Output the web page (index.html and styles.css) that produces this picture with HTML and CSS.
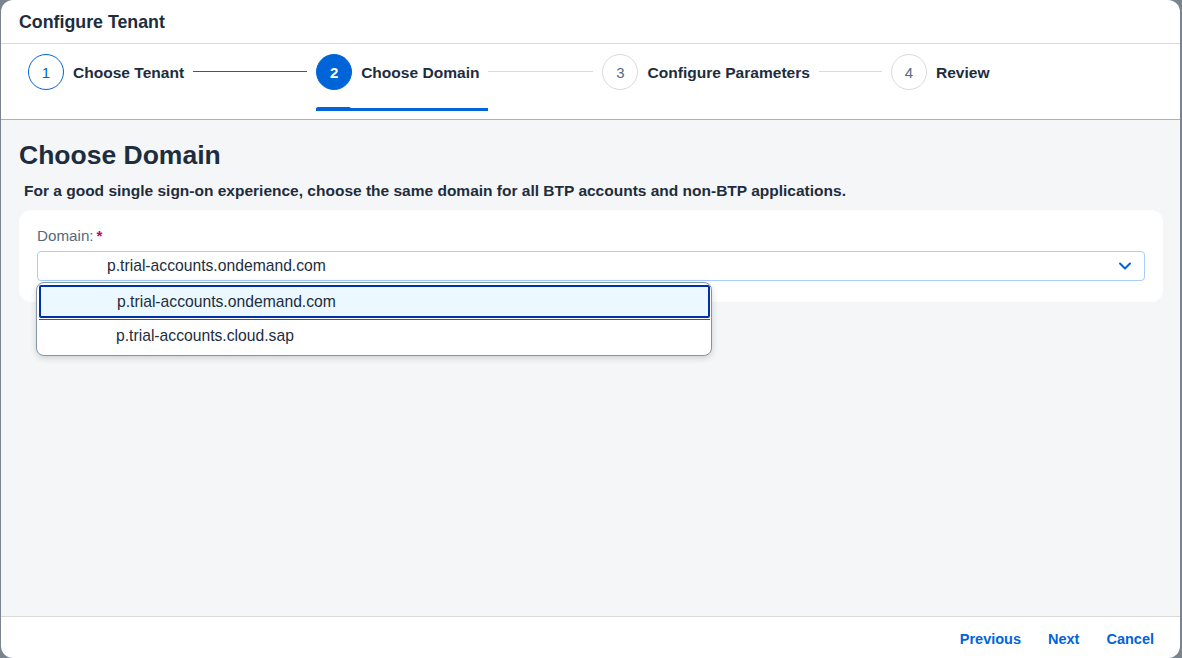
FILE: index.html
```html
<!DOCTYPE html>
<html>
<head>
<meta charset="utf-8">
<link rel="stylesheet" href="styles.css">
</head>
<body>
<div class="dialog">
  <header class="dlg-header">Configure Tenant</header>
  <nav class="wizard">
    <div class="step done">
      <span class="circle">1</span><span class="label">Choose Tenant</span>
    </div>
    <span class="connector blue"></span>
    <div class="step active">
      <span class="circle">2</span><span class="label">Choose Domain</span>
      <span class="underline"></span>
    </div>
    <span class="connector"></span>
    <div class="step">
      <span class="circle">3</span><span class="label">Configure Parameters</span>
    </div>
    <span class="connector short"></span>
    <div class="step">
      <span class="circle">4</span><span class="label">Review</span>
    </div>
  </nav>
  <main class="content">
    <h1 class="title">Choose Domain</h1>
    <p class="hint">For a good single sign-on experience, choose the same domain for all BTP accounts and non-BTP applications.</p>
    <section class="card">
      <label class="field-label">Domain:<span class="req">*</span></label>
      <div class="select">
        <span class="select-value">p.trial-accounts.ondemand.com</span>
        <svg class="chev" width="14" height="14" viewBox="0 0 14 14"><path d="M2 4.5 L7 9.5 L12 4.5" fill="none" stroke="#0064d9" stroke-width="2" stroke-linecap="round" stroke-linejoin="round"/></svg>
      </div>
      <ul class="popup">
        <li class="opt selected">p.trial-accounts.ondemand.com</li>
        <li class="opt">p.trial-accounts.cloud.sap</li>
      </ul>
    </section>
  </main>
  <footer class="dlg-footer">
    <button class="btn">Previous</button>
    <button class="btn">Next</button>
    <button class="btn">Cancel</button>
  </footer>
</div>
</body>
</html>
```
FILE: styles.css
```css
html, body { margin: 0; padding: 0; }
body {
  background: #7a848f;
  font-family: "Liberation Sans", Arial, sans-serif;
  color: #1d2d3e;
  width: 1182px;
  height: 658px;
  overflow: hidden;
}
.dialog {
  margin-left: 1px;
  width: 1179px;
  height: 658px;
  background: #fff;
  border-radius: 12px;
  display: flex;
  flex-direction: column;
  overflow: hidden;
}
.dlg-header {
  height: 44px;
  flex: none;
  box-sizing: border-box;
  padding: 1px 0 0 18px;
  display: flex;
  align-items: center;
  font-size: 17.8px;
  font-weight: bold;
  border-bottom: 1px solid #d9d9d9;
}
.wizard {
  height: 76px;
  flex: none;
  box-sizing: border-box;
  border-bottom: 1px solid #a8b2bd;
  display: flex;
  align-items: flex-start;
  padding: 10px 0 0 27px;
}
.step {
  position: relative;
  display: flex;
  align-items: center;
  height: 36px;
}
.circle {
  width: 36px;
  height: 36px;
  box-sizing: border-box;
  border-radius: 50%;
  border: 1px solid #d9d9d9;
  display: flex;
  align-items: center;
  justify-content: center;
  font-size: 15px;
  color: #556b82;
}
.step.done .circle { border-color: #0064d9; color: #0064d9; }
.step.active .circle { background: #0064d9; border-color: #0064d9; color: #fff; font-weight: bold; }
.label {
  margin-left: 9px;
  padding-top: 1px;
  font-size: 15.55px;
  font-weight: bold;
  color: #1d2d3e;
}
.connector {
  width: 105px;
  height: 1px;
  background: #d9d9d9;
  margin: 17px 9px 0 9px;
}
.connector.blue { width: 114px; background: #0064d9; }
.connector.short { width: 63px; }
.underline {
  position: absolute;
  left: 0;
  right: -9px;
  top: 54px;
  height: 3px;
  background: #0064d9;
}
.underline::before {
  content: "";
  position: absolute;
  left: 0;
  top: -1px;
  width: 35px;
  height: 2px;
  background: #0064d9;
  border-radius: 2px 2px 0 0;
}
.content {
  flex: 1;
  background: #f5f6f7;
  padding: 0 17px 0 18px;
  border-bottom: 1px solid #d9d9d9;
}
.title {
  margin: 19px 0 0 0;
  font-size: 26.5px;
  font-weight: bold;
  line-height: 32px;
}
.hint {
  margin: 11px 0 0 5px;
  font-size: 15.5px;
  font-weight: bold;
  line-height: 18px;
}
.card {
  position: relative;
  margin-top: 10px;
  background: #fff;
  border-radius: 12px;
  height: 92px;
  padding: 16px 18px 0 18px;
  box-sizing: border-box;
}
.field-label {
  display: block;
  font-size: 15.2px;
  color: #556b81;
  line-height: 20px;
}
.req { color: #ba066c; font-weight: bold; margin-left: 3px; }
.select {
  margin-top: 5px;
  height: 30px;
  box-sizing: border-box;
  border: 1px solid #a6cdfb;
  border-radius: 4px;
  display: flex;
  align-items: center;
  padding-left: 69px;
  padding-right: 12px;
  font-size: 15.7px;
}
.select-value { flex: 1; }
.popup {
  position: absolute;
  left: 17px;
  top: 72px;
  width: 676px;
  height: 74px;
  margin: 0;
  padding: 0;
  list-style: none;
  box-sizing: border-box;
  background: #fff;
  border: 1px solid #8396a8;
  border-radius: 8px;
  box-shadow: 0 2px 6px rgba(34, 53, 72, 0.2);
  overflow: hidden;
}
.opt {
  height: 36px;
  box-sizing: border-box;
  display: flex;
  align-items: center;
  padding-left: 79px;
  font-size: 15.7px;
  color: #1d2d3e;
}
.opt.selected {
  margin: 2px 1px 0 2px;
  height: 33px;
  background: #ebf8ff;
  border: 2px solid #0032a5;
  border-radius: 2px;
  padding-left: 76px;
  position: relative;
}
.opt.selected::after {
  content: "";
  position: absolute;
  left: -2px;
  right: -2px;
  bottom: -4px;
  height: 1px;
  background: #0064d9;
}
.dlg-footer {
  flex: none;
  height: 41px;
  display: flex;
  justify-content: flex-end;
  align-items: center;
  padding: 2px 14px 0 0;
  box-sizing: border-box;
  gap: 3px;
}
.btn {
  background: none;
  border: none;
  font-family: inherit;
  font-size: 14.5px;
  font-weight: bold;
  color: #0064d9;
  padding: 0 12px;
  height: 30px;
}
```
